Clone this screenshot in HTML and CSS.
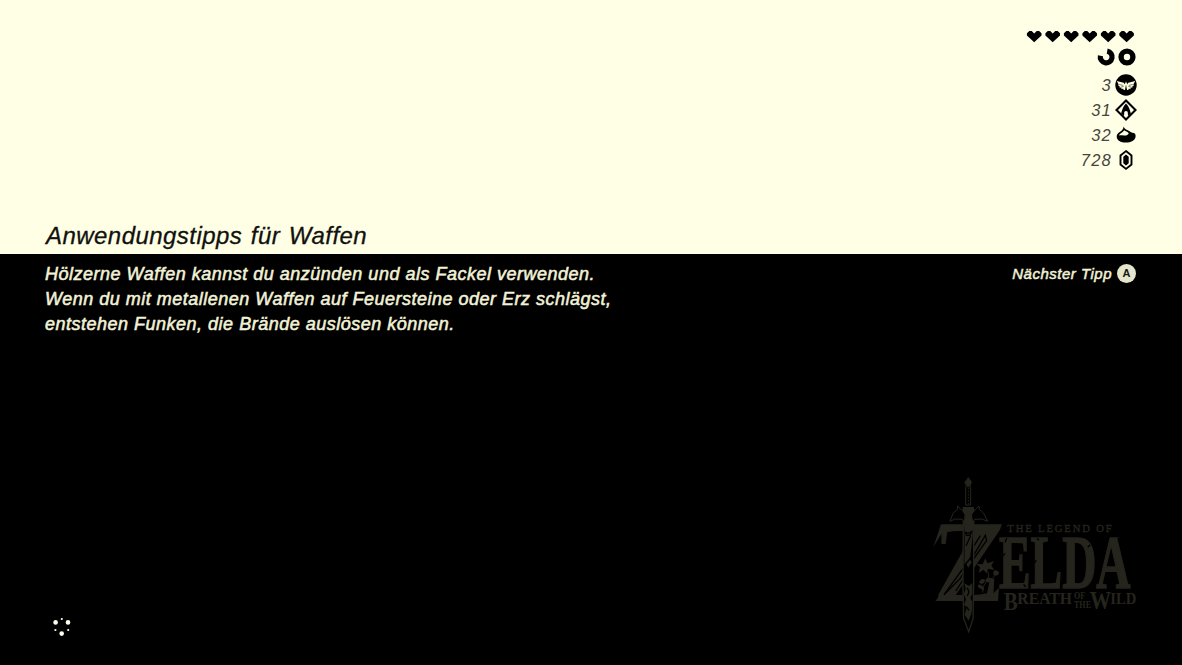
FILE: index.html
```html
<!DOCTYPE html>
<html lang="de">
<head>
<meta charset="utf-8">
<title>Anwendungstipps für Waffen</title>
<link rel="stylesheet" href="styles.css">
</head>
<body>
<main class="screen">
  <section class="top">
    <div class="status">
      <svg class="hearts" width="108" height="12" viewBox="0 0 108 12">
        <defs><path id="heart" d="M7.200 11.300-.1 4.600V2.200L2.300 0H4.700L7.200 2.600 9.700 0h2.400l2.400 2.200v2.400Z"/></defs>
        <use href="#heart" x="0"/><use href="#heart" x="18.5"/><use href="#heart" x="37"/><use href="#heart" x="55.5"/><use href="#heart" x="74"/><use href="#heart" x="92.4"/>
      </svg>
      <svg class="stamina" width="38" height="18" viewBox="0 0 38 18">
        <circle cx="28" cy="9" r="5.900" fill="none" stroke="#000" stroke-width="5.400"/>
        <path d="M8.200 3.100a5.900 5.900 0 1 1-6.800 4.600" fill="none" stroke="#000" stroke-width="5.200"/>
      </svg>
      <div class="row"><span class="num">3</span>
        <svg width="22" height="22" viewBox="0 0 22 22"><circle cx="11" cy="11" r="10.700"/><g fill="#ffffe5"><path id="wing" d="M1.700 7 8.700 8.800l1.500 2.200.4 1.700-.6 3.400-1.500-.4-.4-1.200-1.300.7-.8-1.700-1.300.2-.2-1.700-1.300-.3.400-1.500Z"/><use href="#wing" transform="translate(22 0) scale(-1 1)"/><path d="m11 7.500 1.300 2.700L11 13l-1.300-2.800Z"/></g><path d="m4.300 10.500 4 .9m-2.500 1.700 2.800-.6m9.100-2-4 .9m2.500 1.700-2.800-.6" stroke="#000" stroke-width=".5"/></svg></div>
      <div class="row"><span class="num">31</span>
        <svg width="22" height="22" viewBox="0 0 22 22"><path d="m11 1.500 9.500 9.500-9.500 9.500L1.500 11Z" fill="none" stroke="#000" stroke-width="2.100"/><path d="M11 4.400c2.700 2.500 3.900 5.900 4.900 10.200l-2.500 2.300-1-2.600H9.600l-1 2.600-2.500-2.300C7.100 10.300 8.300 6.900 11 4.400Z"/><circle cx="11" cy="14" r="1.900" fill="#ffffe5"/></svg></div>
      <div class="row"><span class="num">32</span>
        <svg width="22" height="22" viewBox="0 0 22 22"><path d="M8.700 2.600c.5 2.500 2.900 3.200 5.400 4.300 1.700.8 2.200 2 4.700 2 1.400.5 2 1.900 1.800 3.600-.4 4-4.800 6.100-9.700 6.100-5.200 0-9.200-2.200-9.200-6.100C1.700 8 8.200 8.200 8.700 2.600Z"/><path d="M3.800 11.500C4.900 9.200 7.800 8.900 9.200 6.300c1.200 1.200 3.400 1.300 4.600 3-1 1.700-2.600 2.600-5 2.200-1.800-.4-3.300-.5-5 0Z" fill="#ffffe5"/></svg></div>
      <div class="row"><span class="num">728</span>
        <svg width="22" height="22" viewBox="0 0 22 22"><path d="m11 2.100 5.500 4.300v9.200L11 19.900l-5.500-4.300V6.400Z" fill="none" stroke="#000" stroke-width="1.900"/><path d="m11 5.400 2.700 2.400v6.400L11 16.600l-2.700-2.400V7.800Z"/></svg></div>
    </div>
    <h1 class="title">Anwendungstipps für Waffen</h1>
  </section>
  <section class="bottom">
    <div class="tip">
      <p class="copy">Hölzerne Waffen kannst du anzünden und als Fackel verwenden.<br>Wenn du mit metallenen Waffen auf Feuersteine oder Erz schlägst,<br>entstehen Funken, die Brände auslösen können.</p>
      <div class="next"><span>Nächster Tipp</span><b class="button">A</b></div>
    </div>
    <div class="footer">
      <svg class="loader" width="20" height="20" viewBox="0 0 20 20" fill="#fffff0"><circle cx="3.600" cy="6.400" r="2.300"/><circle cx="16" cy="6.400" r="2.300"/><circle cx="9.700" cy="17.600" r="2.300"/><circle cx="9.800" cy="3" r="1.100"/><circle cx="3.400" cy="14" r="1.100"/><circle cx="16.200" cy="14" r="1.100"/></svg>
      <svg class="logo" width="220" height="170" viewBox="0 0 660 510">
        <text x="0" y="0" font-size="351" transform="translate(26 393) scale(.84 1)">Z</text>
        <path class="ink" d="M48 163H231L224 181H56L25 231 48 163ZM31 393l14-17h153l24-22-3 39ZM32 393 172 181h52L80 393Z"/>
        <path class="cut" d="m181 196-42 72-26 29-56 77 48-48 28-41 52-74ZM166 197l-50 80M92 363l48-72"/>
        <path class="blade" d="M115 155h31v187l-2 105-13 38-15-39-2-94Z"/>
        <path class="ink" d="m117 160 28-4-2 42-7 62-18 24 1-81ZM118 340l14 8 10-9v32l-6 13 6 12-2 31-9 25-12-18 6-21-8-9 6-17-7-15 6-15ZM130 261l10 16-10 16-10-16Z"/>
        <path class="cut" d="m121 187 9 3 10-5-5 11h-10ZM123 227l14-29M119 285l23-27M127 353l5 13-5 12M124 410l8 11"/>
        <path class="line" d="m130 23 9 12-4 15h-9l-7-12ZM122 50v55h15V50"/>
        <path class="ink" d="m130 24 10 13-8 12h-5l-7-12ZM113 111h34v14l-7 10 4 26h-27l4-26-8-10Z"/>
        <path class="line" stroke-dasharray="4 5" stroke-width="5" d="M130 54v53"/>
        <path class="line" d="m113 123-8-8-7-7-1 10-13 12-9 24 15-7 22 1 6 11 3-33M147 123l8-8 7-7 1 10 13 12 12 24-18-7-22 1-6 11-3-33"/>
        <path class="ink" d="m181 265 6 15 20-7-8 14 9 13-19-4-4 14-10-11-14 10 4-17-10-10 18 1Z"/>
        <path class="line" d="M188 304c8 20-4 28-12 45l-4 19m12-38c13 0 25-7 28-20"/>
        <path class="ink" d="M205 307c2-11 15-6 17 1 0 8-11 11-17 6ZM193 323c-10-1-14 7-9 13 8 4 16-4 14-12ZM180 329c-8-6-18 2-17 10 8 5 17 1 17-10ZM165 344c-9-2-8 9 0 11l13 7c-2-13-6-16-13-18Z"/>
        <text class="legend" x="247" y="185" font-size="32" textLength="313">THE LEGEND OF</text>
        <text class="zelda" x="0" y="0" font-size="231" transform="translate(222 354) scale(.615 1)">ELDA</text>
        <text x="573" y="207" font-size="9">™</text>
        <path class="cut" d="m245 205-5 12m0 33-7 9m63 84 6 8m34-146 6 6m-8 60-6 8m14 77-6 8m71-146 6 6m-8 62-6 8m12 72-6 8m91-150-8 8m42 140 6 8m28-30-8 6"/>
        <text x="236" y="419" font-size="77" textLength="42" lengthAdjust="spacingAndGlyphs">B</text>
        <text x="277" y="403" font-size="52" textLength="164" lengthAdjust="spacingAndGlyphs">REATH</text>
        <text x="447" y="387" font-size="29" textLength="34" lengthAdjust="spacingAndGlyphs">OF</text>
        <text x="447" y="414" font-size="30" textLength="51" lengthAdjust="spacingAndGlyphs">THE</text>
        <text x="494" y="418" font-size="77" textLength="64" lengthAdjust="spacingAndGlyphs">W</text>
        <text x="556" y="403" font-size="52" textLength="78" lengthAdjust="spacingAndGlyphs">ILD</text>
      </svg>
    </div>
  </section>
</main>
</body>
</html>
```

FILE: styles.css
```css
* { box-sizing: border-box; }
body { margin: 0; background: #000; font-family: "Liberation Sans", Arial, sans-serif; }
.screen { width: 1182px; height: 665px; display: flex; flex-direction: column; overflow: hidden; }
.top { height: 254px; flex: none; background: #ffffe5; display: flex; flex-direction: column; padding: 31px 45px 0; }
.status { display: flex; flex-direction: column; align-items: flex-end; height: 189px; }
.hearts { margin-right: 2px; overflow: visible; }
.stamina { margin: 5px 0 7px; overflow: visible; }
.row { display: flex; align-items: center; height: 25px; gap: 3px; }
.stamina + .row { margin-top: -1px; }
.num { font-size: 16.5px; font-style: italic; line-height: 20px; letter-spacing: 1.2px; color: #45453d; padding-top: 1px; }
.title { margin: 0 0 0 1px; font-size: 24px; line-height: 32px; font-weight: 400; font-style: italic; letter-spacing: .45px; word-spacing: 1.5px; white-space: nowrap; color: #11110e; -webkit-text-stroke: .3px #11110e; }
.bottom { flex: 1; background: #000; padding: 7px 45px 0; display: flex; flex-direction: column; color: #f2f2d8; }
.tip { display: flex; justify-content: space-between; height: 209px; }
.copy { margin: 0; padding-top: 1px; font-size: 18px; line-height: 25px; font-style: italic; white-space: nowrap; letter-spacing: .5px; -webkit-text-stroke: .55px #f2f2d8; }
.next { display: flex; align-items: center; height: 25px; gap: 5px; padding-right: 1px; font-size: 15px; font-style: italic; letter-spacing: .5px; -webkit-text-stroke: .5px #f2f2d8; }
.button { width: 19px; height: 19px; border-radius: 50%; background: #e5e5ce; color: #17170f; font: bold 11px/19px "Liberation Sans", Arial, sans-serif; letter-spacing: 0; text-align: center; -webkit-text-stroke: 0; }
.footer { display: flex; justify-content: space-between; align-items: flex-start; }
.loader { margin: 146px 0 0 7px; }
.logo { margin-right: -8px; fill: #25251d; font-family: "Liberation Serif", serif; font-weight: 700; }
.legend { font-weight: 400; stroke: #25251d; stroke-width: 1; }
.ink { fill: #25251d; }
.line { fill: none; stroke: #25251d; stroke-width: 3; }
.blade { fill: #000; stroke: #25251d; stroke-width: 4; }
.cut { fill: none; stroke: #000; stroke-width: 4; }
.zelda { stroke: #25251d; stroke-width: 5; }
```
